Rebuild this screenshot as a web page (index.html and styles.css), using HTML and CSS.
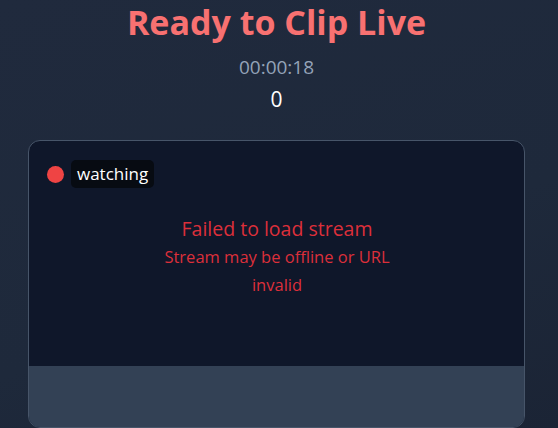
FILE: index.html
```html
<!DOCTYPE html>
<html lang="en">
<head>
<meta charset="utf-8">
<title>Ready to Clip Live</title>
<link rel="stylesheet" href="styles.css">
</head>
<body>
<main class="page">
  <header class="head">
    <h1 class="title">Ready to Clip Live</h1>
    <div class="timer">00:00:18</div>
    <div class="count">0</div>
  </header>
  <section class="card">
    <div class="video">
      <div class="status">
        <span class="dot"></span>
        <span class="label">watching</span>
      </div>
      <div class="error">
        <div class="error-title">Failed to load stream</div>
        <div class="error-sub">Stream may be offline or URL invalid</div>
      </div>
    </div>
    <div class="controls"></div>
  </section>
</main>
</body>
</html>
```

FILE: styles.css
```css
* { box-sizing: border-box; }
html, body {
  margin: 0;
  height: 100%;
}
body {
  background: linear-gradient(160deg, #202a3d 0%, #1e293b 60%, #1b2435 100%);
  font-family: "Open Sans", "Noto Sans", sans-serif;
  color: #fff;
  overflow: hidden;
}
.page {
  display: flex;
  flex-direction: column;
  padding: 0 33px 0 28px;
}
.head {
  display: flex;
  flex-direction: column;
  align-items: center;
}
.title {
  margin: 0;
  padding-top: 2px;
  font-size: 34px;
  line-height: 40px;
  font-weight: 700;
  color: #f87171;
}
.timer {
  margin-top: 13px;
  font-size: 19px;
  line-height: 24px;
  color: #94a3b8;
}
.count {
  margin-top: 6px;
  font-size: 21px;
  line-height: 28px;
  color: #fff;
}
.card {
  margin-top: 27px;
  border: 1px solid #475569;
  border-radius: 12px;
  overflow: hidden;
  background: #0f172a;
}
.video {
  height: 225px;
  display: flex;
  flex-direction: column;
  align-items: center;
  padding: 19px 17px 0 18px;
}
.status {
  align-self: flex-start;
  display: flex;
  align-items: center;
  gap: 7px;
}
.dot {
  width: 17px;
  height: 17px;
  border-radius: 50%;
  background: #ef4444;
}
.label {
  background: #070b12;
  border-radius: 5px;
  padding: 2px 6px 3px;
  font-size: 17px;
  line-height: 23px;
}
.error {
  margin-top: 27px;
  width: 250px;
  text-align: center;
  color: #dc2f3a;
}
.error-title {
  font-size: 19.5px;
  line-height: 28px;
}
.error-sub {
  font-size: 16.5px;
  line-height: 28px;
}
.controls {
  height: 61px;
  background: #334155;
}
```
